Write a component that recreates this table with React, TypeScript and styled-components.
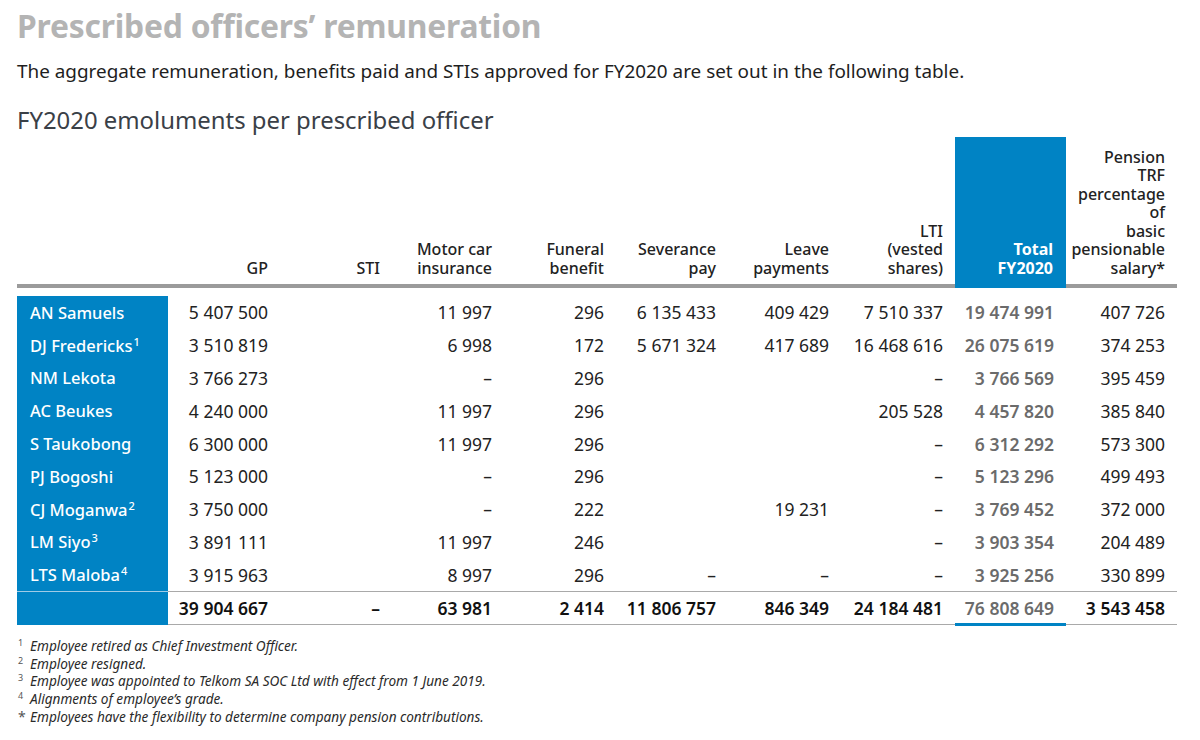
import React from 'react';
import styled, {createGlobalStyle} from "styled-components";

const BLUE = '#0083c4';

type Officer = {
  name: string;
  note?: string;
  values: string[];
};

const officers: Officer[] = [
  {name: 'AN Samuels', values: ['5 407 500', '', '11 997', '296', '6 135 433', '409 429', '7 510 337', '19 474 991', '407 726']},
  {name: 'DJ Fredericks', note: '1', values: ['3 510 819', '', '6 998', '172', '5 671 324', '417 689', '16 468 616', '26 075 619', '374 253']},
  {name: 'NM Lekota', values: ['3 766 273', '', '–', '296', '', '', '–', '3 766 569', '395 459']},
  {name: 'AC Beukes', values: ['4 240 000', '', '11 997', '296', '', '', '205 528', '4 457 820', '385 840']},
  {name: 'S Taukobong', values: ['6 300 000', '', '11 997', '296', '', '', '–', '6 312 292', '573 300']},
  {name: 'PJ Bogoshi', values: ['5 123 000', '', '–', '296', '', '', '–', '5 123 296', '499 493']},
  {name: 'CJ Moganwa', note: '2', values: ['3 750 000', '', '–', '222', '', '19 231', '–', '3 769 452', '372 000']},
  {name: 'LM Siyo', note: '3', values: ['3 891 111', '', '11 997', '246', '', '', '–', '3 903 354', '204 489']},
  {name: 'LTS Maloba', note: '4', values: ['3 915 963', '', '8 997', '296', '–', '–', '–', '3 925 256', '330 899']},
];

const totals = ['39 904 667', '–', '63 981', '2 414', '11 806 757', '846 349', '24 184 481', '76 808 649', '3 543 458'];

const headers: string[][] = [
  ['GP'],
  ['STI'],
  ['Motor car', 'insurance'],
  ['Funeral', 'benefit'],
  ['Severance', 'pay'],
  ['Leave', 'payments'],
  ['LTI', '(vested', 'shares)'],
  ['Total', 'FY2020'],
  ['Pension', 'TRF', 'percentage', 'of', 'basic', 'pensionable', 'salary*'],
];

const colWidths = [151, 112, 112, 112, 112, 112, 113, 114, 111, 111];
const TOTAL_COL = 7;

const footnotes = [
  {mark: '1', text: 'Employee retired as Chief Investment Officer.'},
  {mark: '2', text: 'Employee resigned.'},
  {mark: '3', text: 'Employee was appointed to Telkom SA SOC Ltd with effect from 1 June 2019.'},
  {mark: '4', text: 'Alignments of employee\u2019s grade.'},
  {mark: '*', text: 'Employees have the flexibility to determine company pension contributions.'},
];

const App = () => {
  return (
    <Page>
      <GlobalStyle />
      <Title>Prescribed officers’ remuneration</Title>
      <Intro>The aggregate remuneration, benefits paid and STIs approved for FY2020 are set out in the following table.</Intro>
      <SubTitle>FY2020 emoluments per prescribed officer</SubTitle>

      <Table>
        <colgroup>
          {colWidths.map((w, i) => (
            <col key={i} style={{width: w}} />
          ))}
        </colgroup>
        <thead>
          <tr>
            <HeadCell />
            {headers.map((lines, i) => (
              <HeadCell key={i} highlight={i === TOTAL_COL}>
                {lines.map((line, j) => (
                  <React.Fragment key={j}>
                    {j > 0 && <br />}
                    {line}
                  </React.Fragment>
                ))}
              </HeadCell>
            ))}
          </tr>
        </thead>
        <tbody>
          <tr>
            <SpacerCell colSpan={10} />
          </tr>
          {officers.map((o) => (
            <tr key={o.name}>
              <NameCell>
                {o.name}
                {o.note && <Note>{o.note}</Note>}
              </NameCell>
              {o.values.map((v, i) => (
                <ValueCell key={i} total={i === TOTAL_COL}>{v}</ValueCell>
              ))}
            </tr>
          ))}
          <tr>
            <NameCell last />
            {totals.map((v, i) => (
              <TotalCell key={i} highlight={i === TOTAL_COL}>{v}</TotalCell>
            ))}
          </tr>
        </tbody>
      </Table>

      <Notes>
        {footnotes.map((f) => (
          <NoteRow key={f.mark}>
            <NoteMark star={f.mark === '*'}>{f.mark}</NoteMark>
            <span>{f.text}</span>
          </NoteRow>
        ))}
      </Notes>
    </Page>
  );
};

const GlobalStyle = createGlobalStyle`
  html, body {
    margin: 0;
    padding: 0;
    background: #ffffff;
  }
  body {
    font-family: "Noto Sans", "Open Sans", sans-serif;
    color: #222;
  }
`;

const Page = styled.div`
  width: 1200px;
  height: 740px;
  box-sizing: border-box;
  padding: 4px 23px 0 17px;
  overflow: hidden;
`;

const Title = styled.h1`
  margin: 0;
  font-size: 31.8px;
  line-height: 44px;
  font-weight: 700;
  color: #b4b4b4;
  letter-spacing: -0.2px;
`;

const Intro = styled.p`
  margin: 10px 0 0;
  font-size: 18.9px;
  line-height: 26px;
  color: #1e1e1e;
`;

const SubTitle = styled.h2`
  margin: 20px 0 0;
  font-size: 23.9px;
  line-height: 32px;
  font-weight: 400;
  color: #3a4047;
`;

const Table = styled.table`
  margin-top: 1px;
  width: 1160px;
  table-layout: fixed;
  border-collapse: collapse;
  border-spacing: 0;
`;

const HeadCell = styled.th<{ highlight?: boolean }>`
  height: 140px;
  padding: 0 12px 7px 0;
  vertical-align: bottom;
  text-align: right;
  font-size: 16px;
  line-height: 18.5px;
  font-weight: 500;
  color: ${({highlight}) => (highlight ? '#ffffff' : '#222')};
  background: ${({highlight}) => (highlight ? BLUE : 'transparent')};
  border-bottom: 4px solid ${({highlight}) => (highlight ? BLUE : '#9b9b9b')};
  ${({highlight}) => highlight && 'font-weight: 700; padding-right: 13px;'}
`;

const SpacerCell = styled.td`
  height: 8px;
  padding: 0;
`;

const NameCell = styled.td<{ last?: boolean }>`
  background: ${BLUE};
  color: #ffffff;
  font-size: 16.5px;
  font-weight: 500;
  height: 32.8px;
  padding: 0 0 0 13px;
  white-space: nowrap;
  ${({last}) => last && 'border-top: 1.5px solid #9fcbe6; height: 31px;'}
`;

const Note = styled.span`
  font-size: 11px;
  position: relative;
  top: -6px;
  margin-left: 1px;
`;

const ValueCell = styled.td<{ total?: boolean }>`
  height: 32.8px;
  padding: 0 12px 0 0;
  text-align: right;
  white-space: nowrap;
  font-size: 17.5px;
  font-weight: ${({total}) => (total ? 600 : 400)};
  color: ${({total}) => (total ? '#6b6b6b' : '#222')};
`;

const TotalCell = styled.td<{ highlight?: boolean }>`
  height: 31px;
  padding: 0 12px 0 0;
  text-align: right;
  white-space: nowrap;
  font-size: 17.5px;
  font-weight: 600;
  color: ${({highlight}) => (highlight ? '#6b6b6b' : '#111')};
  border-top: 1.5px solid #a9a9a9;
  border-bottom: ${({highlight}) => (highlight ? `3px solid ${BLUE}` : '1.5px solid #a9a9a9')};
`;

const Notes = styled.div`
  margin-top: 11px;
  display: flex;
  flex-direction: column;
`;

const NoteRow = styled.div`
  display: grid;
  grid-template-columns: 13px 1fr;
  font-size: 13.6px;
  line-height: 17.6px;
  font-style: italic;
  color: #2a2a2a;
`;

const NoteMark = styled.span<{ star?: boolean }>`
  font-style: normal;
  font-size: ${({star}) => (star ? '14px' : '9px')};
  line-height: ${({star}) => (star ? '17.6px' : '12px')};
  padding-left: 1px;
  color: #555;
`;

export default App;
